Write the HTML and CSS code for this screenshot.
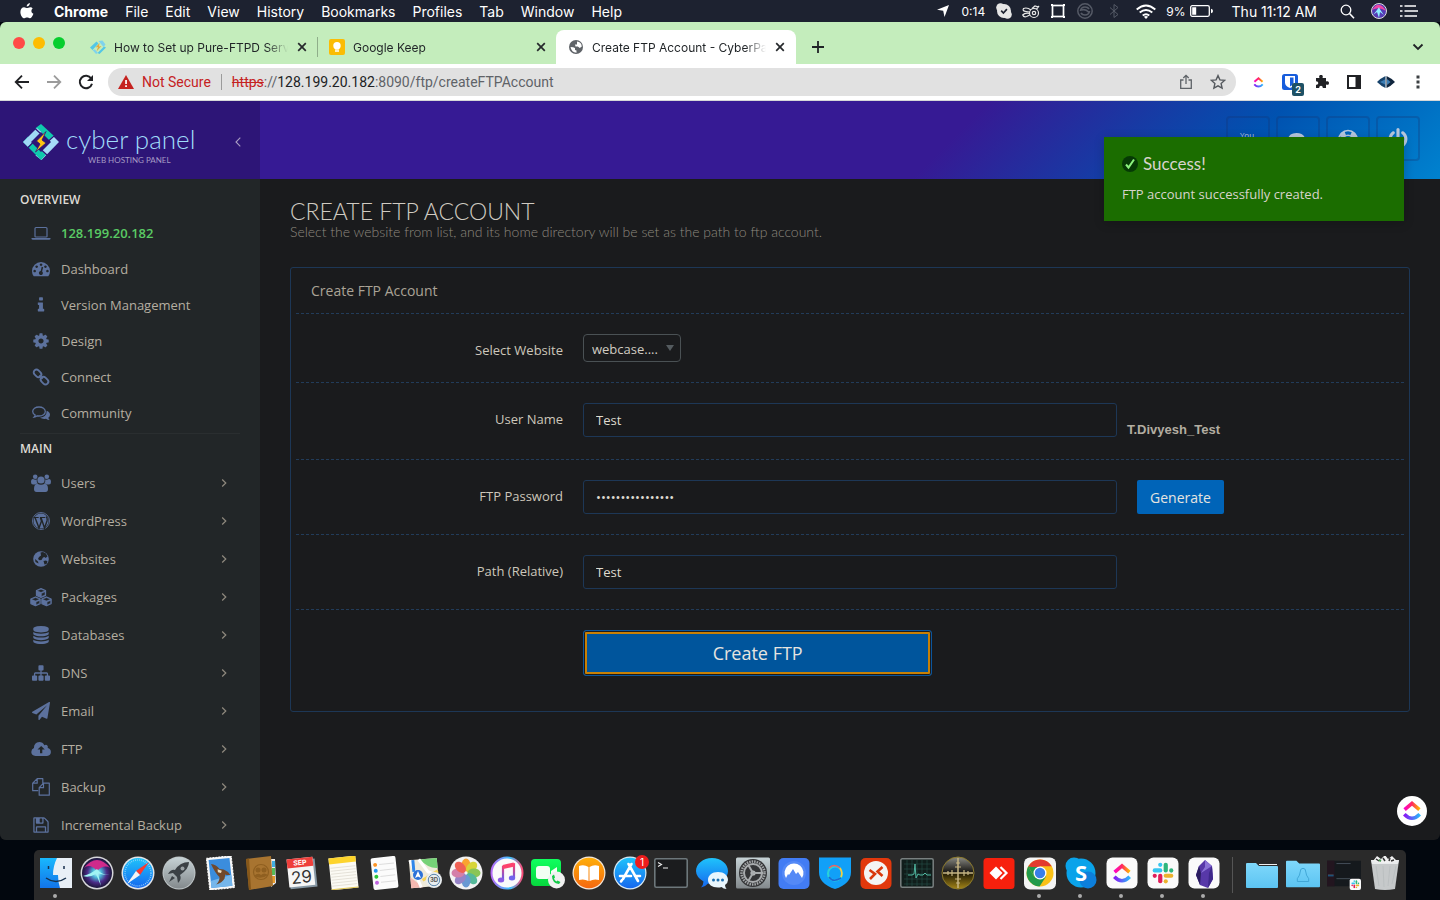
FILE: index.html
```html
<!DOCTYPE html>
<html lang="en">
<head>
<meta charset="utf-8">
<title>Create FTP Account - CyberPanel</title>
<link rel="stylesheet" href="styles.css">
</head>
<body>
<svg class="defs" width="0" height="0" aria-hidden="true">
  <defs>
    <linearGradient id="cuTop" x1="0" x2="1" y1="0" y2="0"><stop offset="0" stop-color="#ff02c8"/><stop offset=".5" stop-color="#ff2a5e"/><stop offset="1" stop-color="#ffb800"/></linearGradient>
    <linearGradient id="cuBot" x1="0" x2="1" y1="0" y2="0"><stop offset="0" stop-color="#8a15f5"/><stop offset="1" stop-color="#28b7fa"/></linearGradient>
    <radialGradient id="siri"><stop offset="0" stop-color="#d9fbff"/><stop offset=".3" stop-color="#4ab8d8"/><stop offset=".65" stop-color="#4b2a86"/><stop offset="1" stop-color="#1a1538"/></radialGradient>
    <linearGradient id="blue" x1="0" x2="0" y1="0" y2="1"><stop offset="0" stop-color="#1fc3fb"/><stop offset="1" stop-color="#1568ef"/></linearGradient>
    <linearGradient id="silver" x1="0" x2="0" y1="0" y2="1"><stop offset="0" stop-color="#c6d2d5"/><stop offset="1" stop-color="#83898c"/></linearGradient>
    <linearGradient id="orange" x1="0" x2="0" y1="0" y2="1"><stop offset="0" stop-color="#ffae08"/><stop offset="1" stop-color="#f5680f"/></linearGradient>
    <linearGradient id="finder" x1="0" x2="0" y1="0" y2="1"><stop offset="0" stop-color="#19b8fd"/><stop offset="1" stop-color="#1274ea"/></linearGradient>
    <linearGradient id="green" x1="0" x2="0" y1="0" y2="1"><stop offset="0" stop-color="#0fff5e"/><stop offset="1" stop-color="#07d73e"/></linearGradient>
    <linearGradient id="note" x1="0" x2="0" y1="0" y2="1"><stop offset="0" stop-color="#fc3d6e"/><stop offset="1" stop-color="#5c5ff0"/></linearGradient>
    <linearGradient id="ring" x1="0" x2="1" y1="0" y2="0"><stop offset="0" stop-color="#b76cf8"/><stop offset=".6" stop-color="#3bc1fb"/><stop offset="1" stop-color="#fc4d78"/></linearGradient>
    <linearGradient id="folder" x1="0" x2="0" y1="0" y2="1"><stop offset="0" stop-color="#7fd8fb"/><stop offset="1" stop-color="#5cc4f2"/></linearGradient>
    <linearGradient id="gold" x1="0" x2="0" y1="0" y2="1"><stop offset="0" stop-color="#8a8a84"/><stop offset=".48" stop-color="#161512"/><stop offset=".55" stop-color="#2c2407"/><stop offset="1" stop-color="#a48517"/></linearGradient>
    <symbol id="clickup" viewBox="0 0 20 20"><path d="M2.600 8.700L10 2.300l7.400 6.400" fill="none" stroke="url(#cuTop)" stroke-width="3.600"/><path d="M2.300 13.300q7.700 8 15.400 0" fill="none" stroke="url(#cuBot)" stroke-width="3.600"/></symbol>
    <symbol id="slack" viewBox="0 0 24 24"><g stroke-width="4.600" stroke-linecap="round" fill="none"><path d="M3 9.200h6" stroke="#36c5f0"/><path d="M9 3v.1" stroke="#36c5f0"/><path d="M15 3v6.200" stroke="#2eb67d"/><path d="M21 9.200v.1" stroke="#2eb67d"/><path d="M15 15h6" stroke="#ecb22e"/><path d="M15 21v.1" stroke="#ecb22e"/><path d="M9 15v6" stroke="#e01e5a"/><path d="M3 15v.1" stroke="#e01e5a"/></g></symbol>
    <symbol id="close" viewBox="0 0 12 12"><path d="M2.200 2.200l7.600 7.600M9.800 2.200L2.200 9.800" stroke="#26292c" stroke-width="1.700"/></symbol>
    <symbol id="right" viewBox="0 0 8 10"><path d="M2.200 1.500L5.800 5 2.200 8.500" fill="none" stroke="#8f897e" stroke-width="1.200"/></symbol>
  </defs>
</svg>

<header class="menubar">
  <nav class="menus">
    <svg class="apple" viewBox="0 0 14 16"><path d="M9.900 0c.1 1.900-1.400 3.600-3.200 3.600C6.500 1.900 8.200.2 9.900 0zM12.700 5.400c-1.900 1.200-1.700 4.300.7 5.300-.6 1.900-2.100 4.600-3.600 4.600-1.100 0-1.500-.7-2.700-.7-1.300 0-1.700.7-2.700.7C2.300 15.300.400 12 .400 8.900.4 6 2.100 4.200 4.100 4.200c1.200 0 2.200.8 3 .8.800 0 2-.9 3.400-.8.900 0 1.700.4 2.200 1.200z" fill="#fff"/></svg>
    <b>Chrome</b><span>File</span><span>Edit</span><span>View</span><span>History</span><span>Bookmarks</span><span>Profiles</span><span>Tab</span><span>Window</span><span>Help</span>
  </nav>
  <div class="status">
    <span class="slot"><svg width="12" height="12" viewBox="0 0 12 12"><path d="M12 0L7.500 12 6.200 5.800 0 4.800z" fill="#fff"/></svg></span>
    <span class="timer">0:14</span>
    <span class="slot"><svg width="16" height="16" viewBox="0 0 16 16"><circle cx="8" cy="8" r="7" fill="#e6e6e6"/><circle cx="4.500" cy="4.500" r="4.300" fill="#e6e6e6"/><circle cx="11.500" cy="11.500" r="4.300" fill="#e6e6e6"/><path d="M5.200 7.700l2.200 2.300 3.500-3.800" fill="none" stroke="#1d2230" stroke-width="1.700"/></svg></span>
    <span class="slot"><svg width="18" height="15" viewBox="0 0 18 15"><g fill="none" stroke="#e8e8e8" stroke-width="1.200"><circle cx="12" cy="9" r="4.500"/><circle cx="12" cy="9" r="1.700"/><path d="M9 6Q5 3 1.500 4.500 0 7 4 7.500L7.500 8M7.500 9.500Q3 8.500.700 11q1 2.500 4 1.500l3-1.500M10 4.500l3-2.500 3.500 1M14.500 5l2.500-3"/></g></svg></span>
    <span class="slot"><svg width="14" height="14" viewBox="0 0 14 14"><rect x="1.500" y="1.500" width="11" height="11" fill="none" stroke="#fff" stroke-width="1.700"/><path d="M0 0h2v2H0zM12 0h2v2h-2zM0 12h2v2H0zM12 12h2v2h-2z" fill="#fff"/></svg></span>
    <span class="slot"><svg width="16" height="16" viewBox="0 0 16 16"><circle cx="8" cy="8" r="7.200" fill="none" stroke="#555a66" stroke-width="1.500"/><path d="M3.500 8Q4 4 8 4q3 0 4 2M12.500 8Q12 12 8 12q-3 0-4-2M4.500 7q4-1.500 7 2" fill="none" stroke="#555a66" stroke-width="1.700"/></svg></span>
    <span class="slot wide"><svg width="10" height="14" viewBox="0 0 10 14"><path d="M1 3.500l8 7-4 3V.500l4 3-8 7" fill="none" stroke="#555a66"/></svg></span>
    <span class="slot wide"><svg width="20" height="15" viewBox="0 0 20 15"><g fill="none" stroke="#fff" stroke-width="1.900"><path d="M.700 5.500q9.300-8 18.600 0M3.700 8.600q6.300-5.300 12.600 0M6.700 11.500q3.300-2.600 6.600 0"/></g><path d="M10 15l-2.100-2.300q2.100-1.500 4.200 0z" fill="#fff"/></svg></span>
    <span class="percent">9%</span>
    <svg width="23" height="12" viewBox="0 0 23 12"><rect x=".700" y=".700" width="18.600" height="10.600" rx="1.500" fill="none" stroke="#fff" stroke-width="1.300"/><path d="M2.200 2.200h4v7.600h-4zM21 3.800q2 .5 2 2.200t-2 2.200z" fill="#fff"/></svg>
    <span class="clock">Thu 11:12 AM</span>
    <span class="slot wide"><svg width="15" height="15" viewBox="0 0 15 15"><circle cx="6" cy="6" r="4.800" fill="none" stroke="#fff" stroke-width="1.300"/><path d="M9.500 9.500l4.500 4.700" stroke="#fff" stroke-width="1.600"/></svg></span>
    <span class="slot wide"><svg width="16" height="16" viewBox="0 0 16 16"><circle cx="8" cy="8" r="7.500" fill="#553bb4" stroke="#ddd"/><path d="M1 7Q8-4 15 8 8 3 1 7z" fill="#f044a5"/><path d="M2 12q5-6 6-8 1 3 5 8l-4-3-1 6-2-6z" fill="#8eeeff"/></svg></span>
    <span class="slot"><svg width="18" height="12" viewBox="0 0 18 12"><path d="M0 1h2.500M4.500 1H16M0 6h2.500M4.500 6H18M0 11h2.500M4.500 11H17" stroke="#fff" stroke-width="1.700"/></svg></span>
  </div>
</header>

<div class="window">
  <div class="tabstrip">
    <div class="lights"><i class="red"></i><i class="yellow"></i><i class="lime"></i></div>
    <div class="tab">
      <svg width="16" height="16" viewBox="0 0 16 16"><path d="M0 8.500L6.500 2.500l2 2L2.500 11zM7.500 14l6.500-6.500 2 1L9.500 15z" fill="#53c7e6"/><path d="M8.500 2l4-.5 3 4-2 2.500zM2.500 11l2.500-.5 3 3.500-2 1z" fill="#7fd3ec"/><path d="M9.500 4L5.500 8.500 8 8l-1.500 4.500L11.500 7 9 7.500z" fill="#e8a83b"/></svg>
      <span class="tab-title">How to Set up Pure-FTPD Server on</span>
      <svg width="12" height="12"><use href="#close"/></svg>
    </div>
    <div class="tab divided">
      <svg width="16" height="16" viewBox="0 0 16 16"><rect width="16" height="16" rx="2" fill="#fbbc04"/><circle cx="8" cy="6.700" r="3.700" fill="#fff"/><path d="M6 8h4v2.500H6zM6 11.300h4v1.400H6z" fill="#fff"/></svg>
      <span class="tab-title">Google Keep</span>
      <svg width="12" height="12"><use href="#close"/></svg>
    </div>
    <div class="tab active">
      <svg width="16" height="16" viewBox="0 0 16 16"><circle cx="8" cy="8" r="7" fill="#5f6368"/><path d="M2.500 8q3 0 4.500 1v2l1.500.5v2.300Q3.500 13.500 2.500 8zM9 2.600q4.500.5 4.800 5l-2 1.300-2-1.500H7.500L7 5.500h2z" fill="#fff"/></svg>
      <span class="tab-title">Create FTP Account - CyberPanel</span>
      <svg width="12" height="12"><use href="#close"/></svg>
    </div>
    <button class="newtab" aria-label="New tab"><svg width="14" height="14" viewBox="0 0 14 14"><path d="M7 1v12M1 7h12" stroke="#202326" stroke-width="1.800"/></svg></button>
    <button class="tabsearch" aria-label="Search tabs"><svg width="12" height="8" viewBox="0 0 12 8"><path d="M1.500 1.500L6 6l4.500-4.500" fill="none" stroke="#202326" stroke-width="1.800"/></svg></button>
  </div>

  <div class="toolbar">
    <div class="tools">
      <button aria-label="Back"><svg width="16" height="16" viewBox="0 0 16 16"><path d="M15 8H2M8 1.700L1.700 8 8 14.300" fill="none" stroke="#202124" stroke-width="1.800"/></svg></button>
      <button aria-label="Forward"><svg width="16" height="16" viewBox="0 0 16 16"><path d="M1 8h13M8 1.700L14.300 8 8 14.300" fill="none" stroke="#9b9b9b" stroke-width="1.800"/></svg></button>
      <button aria-label="Reload"><svg width="16" height="16" viewBox="0 0 16 16"><path d="M13.200 4.500A6.200 6.200 0 1 0 14 9.700" fill="none" stroke="#202124" stroke-width="2"/><path d="M15 1v6H9z" fill="#202124"/></svg></button>
    </div>
    <div class="omnibox">
      <svg width="16" height="14" viewBox="0 0 16 14"><path d="M8 0l8 14H0z" fill="#c5221f"/><path d="M7.200 5h1.700v4H7.200zM7.200 10.200h1.700V12H7.200z" fill="#fff"/></svg>
      <span class="insecure">Not Secure</span>
      <span class="url"><s>https</s>://<b>128.199.20.182</b>:8090/ftp/createFTPAccount</span>
      <button aria-label="Share"><svg width="14" height="16" viewBox="0 0 14 16"><path d="M4.500 6H1.700v8.300h10.600V6H9.500M7 10V1.500M4.300 4L7 1.300 9.700 4" fill="none" stroke="#5f6368" stroke-width="1.300"/></svg></button>
      <button aria-label="Bookmark"><svg width="16" height="16" viewBox="0 0 16 16"><path d="M8 1.600l1.900 4.300 4.700.5-3.500 3.100 1 4.700L8 11.800l-4.100 2.400 1-4.700L1.400 6.400l4.700-.5z" fill="none" stroke="#55595e" stroke-width="1.400"/></svg></button>
    </div>
    <div class="tools">
      <button aria-label="ClickUp"><svg width="11" height="13"><use href="#clickup"/></svg></button>
      <button class="badged" aria-label="Bitwarden"><svg width="16" height="16" viewBox="0 0 16 16"><rect width="16" height="16" rx="2.500" fill="#175ddc"/><path d="M3 2h10v6.500q0 3.500-5 5.500-5-2-5-5.500z" fill="#fff"/><path d="M8 3.500h3.500v5q0 2-3.500 4z" fill="#175ddc"/></svg><span class="badge">2</span></button>
      <button aria-label="Extensions"><svg width="16" height="16" viewBox="0 0 16 16"><path d="M2 4h3.500C4.500 1.500 6 1 7 1s2.500.5 1.500 3H12v3.500c2.500-1 3 .5 3 1.500s-.5 2.500-3 1.500V14H8.800c0-3-3.600-3-3.600 0H2v-3.200c3 0 3-3.600 0-3.600z" fill="#202124"/></svg></button>
      <button aria-label="Side panel"><svg width="14" height="14" viewBox="0 0 14 14"><path d="M0 0h14v14H0zM2 2v10h6.500V2z" fill="#202124" fill-rule="evenodd"/></svg></button>
      <button aria-label="Profile"><svg width="18" height="12" viewBox="0 0 18 12"><path d="M0 6q4-4 8.500-6v12Q4 10 0 6z" fill="#17436c"/><path d="M18 6q-4-4-8.500-6v12Q14 10 18 6z" fill="#10253d"/><path d="M3 6l5-2.500v5zM10 3l3.500 3-3.500 3z" fill="#3c7eb5"/></svg></button>
      <button aria-label="Menu"><svg width="4" height="14" viewBox="0 0 4 14"><path d="M.500.500h3v3h-3zM.500 5.500h3v3h-3zM.500 10.500h3v3h-3z" fill="#3c4043"/></svg></button>
    </div>
  </div>

  <div class="app">
    <aside class="sidebar">
      <div class="brand">
        <svg class="brand-mark" viewBox="0 0 36 36"><path d="M18 0l13 12-5 5L12 4.500z" fill="#0fc9ad"/><path d="M36 18L18.500 36l-6-4.500L30 12z" fill="#a5dcf8"/><path d="M0 18l5-5.500 18 18L18 36z" fill="#0fc9ad"/><path d="M0 18L14 4l5 4.500L5 23z" fill="#9fd8f5"/><path d="M12 4.500l5.500 5M31 12l-6 5.500M24 31l-6-5.500M5 23.500l6-6" stroke="#2d1577" stroke-width="1.200"/><path d="M18 8l10 10-10 10L8 18z" fill="#2d1577"/><path d="M23 7.500L13.500 17l3.500 3-4.500 8L23 19l-4-3z" fill="#fdc512" stroke="#2d1577" stroke-width=".800"/></svg>
        <div class="wordmark"><span>cyber panel</span><small>WEB HOSTING PANEL</small></div>
        <button aria-label="Collapse sidebar"><svg width="6" height="10" viewBox="0 0 6 10"><path d="M5.300.700L1 5l4.300 4.300" fill="none" stroke="#a79bc2" stroke-width="1.100"/></svg></button>
      </div>
      <nav>
        <h2>OVERVIEW</h2>
        <ul class="overview">
          <li><a href="#" class="server"><svg viewBox="0 0 18 18"><path d="M3 4.500q0-1 1-1h10q1 0 1 1v8q0 .5-1 .5H4q-1 0-1-.5z" fill="none" stroke="#5c719d" stroke-width="1.200"/><path d="M-.500 14h19v.8q0 1-1.500 1H1q-1.500 0-1.500-1z"/></svg>128.199.20.182</a></li>
          <li><a href="#"><svg viewBox="0 0 18 18"><path fill-rule="evenodd" d="M0 11a9 9 0 0 1 18 0q0 2.700-1.400 4.800-.3.500-.8.500H2.200q-.5 0-.8-.5Q0 13.700 0 11zm2.600-1.300a1.300 1.300 0 1 0 .1 0zm2-4.300a1.300 1.300 0 1 0 .1 0zM9 3.400a1.300 1.300 0 1 0 .1 0zm4.400 2a1.300 1.300 0 1 0 .1 0zm2 4.300a1.300 1.300 0 1 0 .1 0zM9.700 6.800l-1 4.300a2 2 0 1 0 1.400.4l1.100-4.300z"/></svg>Dashboard</a></li>
          <li><a href="#"><svg viewBox="0 0 1792 1792"><path d="M1216 1344v128q0 26-19 45t-45 19h-512q-26 0-45-19t-19-45v-128q0-26 19-45t45-19h64v-384h-64q-26 0-45-19t-19-45v-128q0-26 19-45t45-19h384q26 0 45 19t19 45v576h64q26 0 45 19t19 45zm-128-1152v192q0 26-19 45t-45 19h-256q-26 0-45-19t-19-45v-192q0-26 19-45t45-19h256q26 0 45 19t19 45z"/></svg>Version Management</a></li>
          <li><a href="#"><svg viewBox="0 0 1792 1792"><path d="M1152 896q0-106-75-181t-181-75-181 75-75 181 75 181 181 75 181-75 75-181zm512-109v222q0 12-8 23t-20 13l-185 28q-19 54-39 91 35 50 107 138 10 12 10 25t-9 23q-27 37-99 108t-94 71q-12 0-26-9l-138-108q-44 23-91 38-16 136-29 186-7 28-36 28h-222q-14 0-24.500-8.500t-11.500-21.500l-28-184q-49-16-90-37l-141 107q-10 9-25 9-14 0-25-11-126-114-165-168-7-10-7-23 0-12 8-23 15-21 51-66.500t54-70.500q-27-50-41-99l-183-27q-13-2-21-12.500t-8-23.500v-222q0-12 8-23t19-13l186-28q14-46 39-92-40-57-107-138-10-12-10-24 0-10 9-23 26-36 98.500-107.500t94.500-71.500q13 0 26 10l138 107q44-23 91-38 16-136 29-186 7-28 36-28h222q14 0 24.500 8.500t11.500 21.500l28 184q49 16 90 37l142-107q9-9 24-9 13 0 25 10 129 119 165 170 7 8 7 22 0 12-8 23-15 21-51 66.500t-54 70.500q26 50 41 98l183 28q13 2 21 12.500t8 23.500z"/></svg>Design</a></li>
          <li><a href="#"><svg viewBox="0 0 18 18"><g fill="none" stroke="#5c719d" stroke-width="1.900"><rect x="1.300" y="2.600" width="8.400" height="5.600" rx="2.800" transform="rotate(45 5.500 5.400)"/><rect x="8.300" y="9.800" width="8.400" height="5.600" rx="2.800" transform="rotate(45 12.500 12.600)"/><path d="M7.300 7.300l3.400 3.400"/></g></svg>Connect</a></li>
          <li><a href="#"><svg viewBox="0 0 18 18"><path d="M7 3c3.600 0 6.300 2 6.300 4.500S10.600 12 7 12q-.8 0-1.700-.2-1.500 1.100-3.200 1.300 1-1.100 1.100-2.100Q.700 9.700.700 7.500C.700 5 3.400 3 7 3z" fill="none" stroke="#5c719d" stroke-width="1.300"/><path d="M14.700 6.800q3.300 1.300 3.300 4 0 1.800-1.700 3 .3 1.300 1.400 2.200-2.200 0-3.700-1.200-3.300.6-6-1 6.700-.8 6.700-7z"/></svg>Community</a></li>
        </ul>
        <h2>MAIN</h2>
        <ul class="main-nav">
          <li><a href="#"><svg viewBox="0 0 18 18"><circle cx="3.200" cy="2.700" r="2.300"/><circle cx="14.800" cy="2.700" r="2.300"/><path d="M-1 8q0-3 2-3 2 1 3.700.5Q4.300 8 6 9.500q-1.500 0-2.500 1H1Q-1 10.500-1 8zM19 8q0-3-2-3-2 1-3.700.5Q13.700 8 12 9.500q1.500 0 2.500 1H17q2 0 2-2.500z"/><circle cx="9" cy="6" r="3.600"/><path d="M2 15q0-5 3.300-5.300Q9 12 12.700 9.700 16 10 16 15q0 3-2.500 3h-9Q2 18 2 15z"/></svg>Users<svg class="chev"><use href="#right"/></svg></a></li>
          <li><a href="#"><svg viewBox="0 0 18 18"><circle cx="9" cy="9" r="8.500" fill="none" stroke="#5c719d" stroke-width=".900"/><circle cx="9" cy="9" r="7.500"/><path d="M1.500 5.500h5.200M8 5.500h5.300" stroke="#222628"/><path d="M3 5.500l4 10.500L9.500 9 8.300 5.500M9 5.500L12.500 16l2.500-7q.6-2.200-.7-4.500" fill="none" stroke="#222628" stroke-width="1.400"/></svg>WordPress<svg class="chev"><use href="#right"/></svg></a></li>
          <li><a href="#"><svg viewBox="0 0 18 18"><circle cx="9" cy="9" r="7.800"/><path d="M8.500 2.500l2.500-.5 3 1.500 1.500 3-2 1.500-1-1-1.500.5-1.500 2.500-2 .3L6 9l1-2 2-1.500zM11.500 11l2.500-.5 1.500 1-1 2.500-2 .5zM3 9l3 2.500.5 2L3.500 12z" fill="#222628"/></svg>Websites<svg class="chev"><use href="#right"/></svg></a></li>
          <li><a href="#"><svg class="big" viewBox="0 0 22 18"><g stroke="#5c719d" stroke-width="1.300" stroke-linejoin="round"><path d="M6.500 2.500L11 .700l4.500 1.800v4.800L11 9.300 6.500 7.300zM.900 11l4.600-2 4.600 2v4.600l-4.600 2-4.600-2zM11.900 11l4.600-2 4.600 2v4.600l-4.600 2-4.600-2z"/><path d="M7.300 2.700L11 4.300l3.700-1.600L11 1.400zM1.700 11.200l3.800 1.600 3.800-1.600-3.800-1.500zM12.700 11.200l3.800 1.600 3.800-1.600-3.800-1.500zM11.600 5.600l3.300-1.500v2.700l-3.300 1.400zM6.200 14.100l3.300-1.400v2.500l-3.300 1.500zM17.200 14.100l3.300-1.400v2.500l-3.300 1.500z" fill="#222628" stroke-width=".300"/></g></svg>Packages<svg class="chev"><use href="#right"/></svg></a></li>
          <li><a href="#"><svg viewBox="0 0 1792 1792"><path d="M896 768q237 0 443-43t325-127v170q0 69-103 128t-280 93.500-385 34.500-385-34.500-280-93.500-103-128v-170q119 84 325 127t443 43zm0 768q237 0 443-43t325-127v170q0 69-103 128t-280 93.500-385 34.500-385-34.500-280-93.500-103-128v-170q119 84 325 127t443 43zm0-384q237 0 443-43t325-127v170q0 69-103 128t-280 93.500-385 34.500-385-34.500-280-93.500-103-128v-170q119 84 325 127t443 43zm0-1152q208 0 385 34.500t280 93.500 103 128v128q0 69-103 128t-280 93.500-385 34.500-385-34.500-280-93.500-103-128v-128q0-69 103-128t280-93.500 385-34.500z"/></svg>Databases<svg class="chev"><use href="#right"/></svg></a></li>
          <li><a href="#"><svg viewBox="0 0 1792 1792"><path d="M1792 1248v320q0 40-28 68t-68 28h-320q-40 0-68-28t-28-68v-320q0-40 28-68t68-28h96v-192h-512v192h96q40 0 68 28t28 68v320q0 40-28 68t-68 28h-320q-40 0-68-28t-28-68v-320q0-40 28-68t68-28h96v-192h-512v192h96q40 0 68 28t28 68v320q0 40-28 68t-68 28h-320q-40 0-68-28t-28-68v-320q0-40 28-68t68-28h96v-192q0-52 38-90t90-38h512v-192h-96q-40 0-68-28t-28-68v-320q0-40 28-68t68-28h320q40 0 68 28t28 68v320q0 40-28 68t-68 28h-96v192h512q52 0 90 38t38 90v192h96q40 0 68 28t28 68z"/></svg>DNS<svg class="chev"><use href="#right"/></svg></a></li>
          <li><a href="#"><svg viewBox="0 0 1792 1792"><path d="M1764 11q33 24 27 64l-256 1536q-5 29-32 45-14 8-31 8-11 0-24-5l-453-185-242 295q-18 23-49 23-13 0-22-4-19-7-30.500-23.500t-11.500-36.500v-349l864-1059-1069 925-395-162q-37-14-40-55-2-40 32-59l1664-960q15-9 32-9 20 0 36 11z"/></svg>Email<svg class="chev"><use href="#right"/></svg></a></li>
          <li><a href="#"><svg viewBox="0 0 18 18"><path fill-rule="evenodd" d="M3.500 16Q-.700 15.500-.700 12q0-2.800 2.600-4Q2 2.300 7.300 2q3.500 0 5 3.300 2-1.200 3.200.4.700 1 .2 2.300 3.200.9 3.200 4 0 3.600-3.900 4zM8 13.300h2.300V9.500h2.500L9.200 5.900 5.500 9.500H8z"/></svg>FTP<svg class="chev"><use href="#right"/></svg></a></li>
          <li><a href="#"><svg viewBox="0 0 18 18"><path d="M10.800 6.500V.700H5.200L.700 5.200v7.500h5.500M5.200.700v4.500H.700M11.500 5.200h5.800v12H7.200V9.700zM11.500 5.200v4.500H7.200" fill="none" stroke="#5c719d" stroke-width="1.200" stroke-linejoin="round"/></svg>Backup<svg class="chev"><use href="#right"/></svg></a></li>
          <li><a href="#"><svg viewBox="0 0 1792 1792"><path d="M512 1536h768v-384h-768v384zm896 0h128v-896q0-14-10-38.500t-20-34.500l-281-281q-10-10-34-20t-39-10v416q0 40-28 68t-68 28h-576q-40 0-68-28t-28-68v-416h-128v1280h128v-416q0-40 28-68t68-28h832q40 0 68 28t28 68v416zm-384-928v-320q0-13-9.500-22.500t-22.500-9.500h-192q-13 0-22.500 9.500t-9.500 22.500v320q0 13 9.500 22.500t22.500 9.500h192q13 0 22.500-9.500t9.500-22.500zm640 32v928q0 40-28 68t-68 28h-1344q-40 0-68-28t-28-68v-1344q0-40 28-68t68-28h928q40 0 88 20t76 48l280 280q28 28 48 76t20 88z"/></svg>Incremental Backup<svg class="chev"><use href="#right"/></svg></a></li>
        </ul>
      </nav>
    </aside>

    <div class="page">
      <div class="topbar">
        <button aria-label="YouTube"><svg width="20" height="22" viewBox="0 0 20 22"><text class="yt" x="9" y="10" text-anchor="middle">You</text><rect x="2" y="12" width="16" height="10" rx="2"/></svg></button>
        <button aria-label="Messages"><svg width="20" height="22" viewBox="0 0 20 22"><path d="M0 11q1-6 8.500-6 6 0 8 4 3.500 0 3.500 4 0 4-5 5H6q-6-1-6-7z"/></svg></button>
        <button aria-label="Support"><svg width="22" height="22" viewBox="0 0 22 22"><g fill="none" stroke="#b8c8de"><circle cx="11" cy="12" r="9.400" stroke-width="1.500"/><circle cx="11" cy="12" r="4.800" stroke-width="1.500"/><circle cx="11" cy="12" r="7.200" stroke-width="5" stroke-dasharray="5.310 6" stroke-dashoffset="-3"/></g></svg></button>
        <button aria-label="Log out"><svg width="22" height="22" viewBox="0 0 1792 1792"><path d="M1664 896q0 156-61 298t-164 245-245 164-298 61-298-61-245-164-164-245-61-298q0-182 80.500-343t226.500-270q43-32 95.500-25t83.500 50q32 42 24.500 94.500t-49.500 84.500q-98 74-151.500 181t-53.500 228q0 104 40.500 198.500t109.500 163.500 163.500 109.500 198.500 40.500 198.500-40.500 163.500-109.500 109.500-163.500 40.500-198.500q0-121-53.500-228t-151.500-181q-42-32-49.500-84.500t24.500-94.500q31-43 84-50t95 25q146 109 226.500 270t80.500 343zm-640-768v640q0 52-38 90t-90 38-90-38-38-90v-640q0-52 38-90t90-38 90 38 38 90z"/></svg></button>
      </div>
      <main>
        <h1>CREATE FTP ACCOUNT</h1>
        <p class="lead">Select the website from list, and its home directory will be set as the path to ftp account.</p>
        <form class="panel">
          <h3>Create FTP Account</h3>
          <div class="row">
            <label for="site">Select Website</label>
            <div class="field picker">
              <select id="site"><option>webcase....</option></select>
              <svg width="8" height="6" viewBox="0 0 8 6"><path d="M0 0h8L4 6z" fill="#545b5f"/></svg>
            </div>
          </div>
          <div class="row">
            <label for="user">User Name</label>
            <div class="field"><input id="user" type="text" value="Test"></div>
            <output class="fullname" for="user">T.Divyesh_Test</output>
          </div>
          <div class="row">
            <label for="pass">FTP Password</label>
            <div class="field"><input id="pass" type="password" value="abcdefghijklmnop"></div>
            <div class="aside"><button type="button" class="generate">Generate</button></div>
          </div>
          <div class="row">
            <label for="path">Path (Relative)</label>
            <div class="field"><input id="path" type="text" value="Test"></div>
          </div>
          <div class="row last">
            <div class="submit"><button type="button" class="create">Create FTP</button></div>
          </div>
        </form>
      </main>
    </div>

    <div class="toast" role="status">
      <h4><svg width="16" height="16" viewBox="0 0 16 16"><circle cx="8" cy="8" r="8" fill="#063a05"/><path d="M4 8.500l2.500 3L12 3.500" fill="none" stroke="#8bf27d" stroke-width="2"/></svg>Success!</h4>
      <p>FTP account successfully created.</p>
    </div>
    <button class="floating" aria-label="ClickUp"><svg width="20" height="22"><use href="#clickup"/></svg></button>
  </div>
</div>

<footer class="dock">
  <span class="app-icon running"><svg viewBox="0 0 34 34"><path d="M1 2h32v30H1z" fill="#e8eff6"/><path d="M1 2h17q-4 8-4 17h5q0 7 2 13H1z" fill="url(#finder)"/><path d="M9.500 10v3M25 10v3M7 22q10 7 20 0" fill="none" stroke="#17314d" stroke-width="1.500"/></svg></span>
  <span class="app-icon"><svg viewBox="0 0 34 34"><circle cx="17" cy="17" r="16.500" fill="#d6d6da"/><circle cx="17" cy="17" r="15" fill="url(#siri)"/><path d="M4 12Q17-4 30 12 24 8 17 15 10 7 4 12z" fill="#d02a8b"/><path d="M3 20q8-2 14-7 4 6 13 6-8 0-12-2l3 13-5-12Q9 22 3 20z" fill="#9ff4f4"/></svg></span>
  <span class="app-icon"><svg viewBox="0 0 34 34"><circle cx="17" cy="17" r="16.500" fill="#e3e5e8"/><circle cx="17" cy="17" r="15" fill="url(#blue)"/><circle cx="17" cy="17" r="13" fill="none" stroke="#a5daf9" stroke-width="1.500" stroke-dasharray=".7 1.300"/><path d="M28 6L19 19l-4-4z" fill="#fb3a30"/><path d="M6 28l9-13 4 4z" fill="#f4f4f4"/></svg></span>
  <span class="app-icon"><svg viewBox="0 0 34 34"><circle cx="17" cy="17" r="16.500" fill="#bfc6c8"/><circle cx="17" cy="17" r="15.500" fill="url(#silver)"/><path d="M27 6q-9 0-14 8-4-1-7 4l5-1 4 4 1 6q4-4 2-8 9-6 9-13zM10 20l-3 6 6-4z" fill="#3b4145"/><circle cx="20.500" cy="12.500" r="2" fill="#9aa1a4"/></svg></span>
  <span class="app-icon"><svg viewBox="0 0 34 34"><g transform="rotate(-6 17 17)"><rect x="5" y="1" width="25" height="32" fill="#f7f7f7" stroke="#fff" stroke-dasharray="2 1"/><path d="M7 3h21v28H7z" fill="#3b8ddd"/><path d="M7 24l21-4v11H7z" fill="#75b6eb"/><path d="M9 7q5 1 8 6l4 1q4 2 6 6-3 0-5-1l-1 4q-3 4-9 5 4-3 4-7-4-5-7-14z" fill="#71492c"/><path d="M15 13l4 2-1 2-3-1z" fill="#eee0c3"/></g></svg></span>
  <span class="app-icon"><svg viewBox="0 0 34 34"><path d="M27 3h4l1 24-5 4z" fill="#eee"/><path d="M28 5h3v6h-3z" fill="#41aee2"/><path d="M28 12h3v7h-3z" fill="#57bd58"/><path d="M28 20h3v7h-3z" fill="#e79b2e"/><path d="M2 3l25-3 2 30-24 4z" fill="#a87430"/><path d="M2 3l3 31 2-.5-2-31z" fill="#865719"/><circle cx="17" cy="16" r="7.500" fill="none" stroke="#8f5f20" stroke-width="1.200"/><circle cx="14" cy="14" r="2.500" fill="#8f5f20"/><circle cx="20" cy="14" r="2.500" fill="#8f5f20"/><path d="M10 20q4-4 7-1 3-3 7 0-7 5-14 1z" fill="#8f5f20"/></svg></span>
  <span class="app-icon"><svg viewBox="0 0 34 34"><g transform="rotate(-6 17 17)"><path d="M4 4h27v28H4z" fill="#8697a4"/><path d="M3 2h26v28H3z" fill="#f6f6f6"/><path d="M3 2h26v9H3z" fill="#ee3f3b"/><text class="cal-month" x="16" y="9" text-anchor="middle">SEP</text><text class="cal-day" x="16" y="27" text-anchor="middle">29</text></g></svg></span>
  <span class="app-icon"><svg viewBox="0 0 34 34"><g transform="rotate(-6 17 17)"><path d="M4 1h27v32H4z" fill="#fbfaf4"/><path d="M4 1h27v6H4z" fill="#fdd42c"/><path d="M5 11h25M5 14h25M5 17h25M5 20h25M5 23h25M5 26h25M5 29h25" stroke="#ddd9ce" stroke-width=".700"/><path d="M4 32.500h27" stroke="#dec34d"/></g></svg></span>
  <span class="app-icon"><svg viewBox="0 0 34 34"><g transform="rotate(-6 17 17)"><rect x="5" y="1" width="25" height="32" rx="2" fill="#fbfbfb"/><path d="M13 8h15M13 14h15M13 20h15M13 26h15" stroke="#ddd"/><circle cx="9" cy="8" r="2" fill="#fb9426"/><circle cx="9" cy="14" r="2" fill="#2398f5"/><circle cx="9" cy="20" r="2" fill="#2bc73a"/><circle cx="9" cy="26" r="2" fill="#c266e2"/></g></svg></span>
  <span class="app-icon"><svg viewBox="0 0 34 34"><g transform="rotate(-5 17 17)"><path d="M2 3h28v28H2z" fill="#eeeadb"/><path d="M13 3h17v10q-9 0-17-10z" fill="#76d278"/><path d="M2 20l12 11H2z" fill="#f4b8b0"/><path d="M3 3l9 28M12 3l8 13 10 5" fill="none" stroke="#fff" stroke-width="3"/><path d="M6 3v12" stroke="#2e86ea" stroke-width="3"/><path d="M14 24l16-8" stroke="#f5d35c" stroke-width="3"/></g><circle cx="10" cy="19" r="5" fill="#2b72d8"/><path d="M10 15l3 7-3-1.500L7 22z" fill="#fff"/><circle cx="26" cy="24" r="8" fill="#e9edef"/><circle cx="26" cy="24" r="5.700" fill="none" stroke="#5b86ab"/><text class="map-text" x="26" y="26" text-anchor="middle">3D</text></svg></span>
  <span class="app-icon"><svg viewBox="0 0 34 34"><circle cx="17" cy="17" r="16.500" fill="#f3f3f3"/><g opacity=".9"><ellipse cx="17" cy="9" rx="4.500" ry="6.500" fill="#fb9b1c"/><ellipse cx="17" cy="9" rx="4.500" ry="6.500" fill="#d5d225" transform="rotate(45 17 17)"/><ellipse cx="17" cy="9" rx="4.500" ry="6.500" fill="#7fc144" transform="rotate(90 17 17)"/><ellipse cx="17" cy="9" rx="4.500" ry="6.500" fill="#45b390" transform="rotate(135 17 17)"/><ellipse cx="17" cy="9" rx="4.500" ry="6.500" fill="#5b90d0" transform="rotate(180 17 17)"/><ellipse cx="17" cy="9" rx="4.500" ry="6.500" fill="#8d77c3" transform="rotate(225 17 17)"/><ellipse cx="17" cy="9" rx="4.500" ry="6.500" fill="#d173a1" transform="rotate(270 17 17)"/><ellipse cx="17" cy="9" rx="4.500" ry="6.500" fill="#ef5245" transform="rotate(315 17 17)"/></g></svg></span>
  <span class="app-icon"><svg viewBox="0 0 34 34"><circle cx="17" cy="17" r="15.500" fill="#fafafa" stroke="url(#ring)" stroke-width="2"/><path d="M13 24V11l11-2.500V22" fill="none" stroke="url(#note)" stroke-width="2.200"/><path d="M13 11l11-2.500" stroke="#fc426d" stroke-width="4"/><ellipse cx="11" cy="24" rx="3.200" ry="2.500" fill="#8b5ae4"/><ellipse cx="22" cy="22" rx="3.200" ry="2.500" fill="#7163ed"/></svg></span>
  <span class="app-icon"><svg viewBox="0 0 34 34"><rect x="0" y="3" width="30" height="27" rx="4" fill="url(#green)"/><rect x="5" y="10" width="14" height="13" rx="3" fill="#f2fff4"/><path d="M20 15l6-4v11l-6-4z" fill="#f2fff4"/><circle cx="25.500" cy="24" r="8.500" fill="#f1f1f1"/><path d="M21 20q0 7 7 8l1.500-2-3-1.500-1 1q-2-1-2.500-3l1-1-1-3z" fill="#14c948"/></svg></span>
  <span class="app-icon"><svg viewBox="0 0 34 34"><circle cx="17" cy="17" r="16.500" fill="#f2e7db"/><circle cx="17" cy="17" r="15.300" fill="url(#orange)"/><path d="M16.500 11Q12 8 7 10v14q5-1.500 9.500 1zM17.500 11Q22 8 27 10v14q-5-1.500-9.500 1z" fill="#fff"/></svg></span>
  <span class="app-icon"><svg viewBox="0 0 34 34"><circle cx="17" cy="17" r="16.500" fill="#d9ebf5"/><circle cx="17" cy="17" r="15.300" fill="url(#blue)"/><path d="M18.500 8L10 23M15.500 8L25 25M7 20h11M22 20h5M9 24l-1 1.500" stroke="#fff" stroke-width="2.600" stroke-linecap="round"/></svg><em>1</em></span>
  <span class="app-icon"><svg viewBox="0 0 34 34"><rect x=".800" y="2.800" width="32.400" height="28.400" rx="1.500" fill="#1b1c1e" stroke="#6d777b" stroke-width="1.600"/><path d="M4 6.500l3.500 2L4 10.500M9 12h5" fill="none" stroke="#eee" stroke-width="1.100"/></svg></span>
  <span class="app-icon"><svg viewBox="0 0 34 34"><path d="M17 2c9 0 16 6 16 13s-7 13-16 13q-2 0-4-.5-3 3.500-7 4 2.500-3 2.500-6Q1 21 1 15C1 8 8 2 17 2z" fill="url(#blue)"/><path d="M23 16c6 0 10 3.500 10 8q0 3-3 5 0 2 1.500 4-3 0-5-2-1.500.5-3.500.5c-6 0-10-3-10-7.500s4-8 10-8z" fill="#e9f6fd"/><g fill="#1c6eae"><circle cx="18.500" cy="24" r="1.500"/><circle cx="23" cy="24" r="1.500"/><circle cx="27.500" cy="24" r="1.500"/></g></svg></span>
  <span class="app-icon"><svg viewBox="0 0 34 34"><rect x="0" y="1.500" width="34" height="31" rx="1.500" fill="url(#silver)"/><circle cx="17" cy="17" r="14" fill="#343537"/><circle cx="17" cy="17" r="11.500" fill="none" stroke="#a3a6a8" stroke-width="2.500" stroke-dasharray="1.500 1"/><circle cx="17" cy="17" r="9" fill="none" stroke="#a8abad" stroke-width="2"/><circle cx="17" cy="17" r="2.600" fill="#b4b7b9"/><path d="M17 17h10M17 17l-5-8.600M17 17l-5 8.600" stroke="#a8abad" stroke-width="2"/></svg></span>
  <span class="app-icon"><svg viewBox="0 0 34 34"><rect x="1.500" y="2" width="31" height="31" rx="5" fill="#427cf4"/><circle cx="17" cy="17" r="12" fill="#5489f6"/><path d="M9 22a9.500 9.500 0 1 1 16 0l-4-6-2 2-3-5-4 6-1-1z" fill="#fff"/></svg></span>
  <span class="app-icon"><svg viewBox="0 0 34 34"><path d="M1 1.500h32V16q0 12-16 17Q1 28 1 16z" fill="#11a0f8"/><circle cx="17" cy="17.500" r="7" fill="none" stroke="#2ad0d8" stroke-width="2.200"/><path d="M11 12q5-5 11 0" fill="none" stroke="#f35f62" stroke-width="1.600"/><path d="M22 12q3 5 1 9" fill="none" stroke="#ffc83c" stroke-width="1.600"/><path d="M11 21q4 6 12 1" fill="none" stroke="#1c67d5" stroke-width="1.600"/></svg></span>
  <span class="app-icon"><svg viewBox="0 0 34 34"><rect x="1.500" y="2" width="31" height="31" rx="5" fill="#e2380c"/><circle cx="17" cy="17" r="12" fill="#f4f4f4"/><path d="M10.500 14l5.500 4-5 5M23.500 11l-5 4.500 5 4.500" fill="none" stroke="#d9390d" stroke-width="2.600"/></svg></span>
  <span class="app-icon"><svg viewBox="0 0 34 34"><rect x=".800" y="2.800" width="32.400" height="28.400" rx="1.500" fill="#101d1b" stroke="#798080" stroke-width="1.500"/><path d="M4 8h27M4 13h27M4 18h27M4 23h27M4 28h27M7 4v26M12 4v26M17 4v26M22 4v26M27 4v26" stroke="#27504a" stroke-width=".600"/><path d="M8 19h4l2-1 1-10 1 14 2-4 2 1h3l2-2 2 2h4" fill="none" stroke="#4fb59e"/></svg></span>
  <span class="app-icon"><svg viewBox="0 0 34 34"><circle cx="17" cy="17" r="16" fill="url(#gold)" stroke="#8c7a2b"/><path d="M17 2v30M2 17h30" stroke="#c7b684" stroke-width="1.500"/><path d="M15 7h4M14 11h6M14 23h6M15 27h4M7 15v4M11 14v6M23 14v6M27 15v4" stroke="#c7b684" stroke-width="1.200"/></svg></span>
  <span class="app-icon"><svg viewBox="0 0 34 34"><rect x="1.500" y="2" width="31" height="31" rx="3.500" fill="#f7200d"/><path d="M14 10.500l6.500 6.500-6.500 6.500L7.500 17z" fill="#fff"/><path d="M18.500 11l6 6-6 6" fill="none" stroke="#fff" stroke-width="2.200"/></svg></span>
  <span class="app-icon running"><svg viewBox="0 0 34 34"><rect x="1" y="1.500" width="32" height="32" rx="6" fill="#f4f4f4"/><circle cx="17" cy="17" r="13.500" fill="#fbc116"/><path d="M5.300 10.300A13.500 13.500 0 0 1 28.700 10.300H17z" fill="#e33b2e"/><path d="M5.300 10.300A13.500 13.500 0 0 0 16.500 30.500L23 20.500H11z" fill="#229a4a"/><path d="M5.300 10.300L11 20.500l6-3.500V10z" fill="#229a4a"/><path d="M5.300 10.300L17 4v7H9z" fill="#e33b2e"/><circle cx="17" cy="17" r="6.500" fill="#fff"/><circle cx="17" cy="17" r="5.200" fill="#397fe8"/></svg></span>
  <span class="app-icon running"><svg viewBox="0 0 34 34"><circle cx="17" cy="17" r="14.500" fill="#0aa3ea"/><circle cx="10" cy="10" r="8.500" fill="#0aa3ea"/><circle cx="24" cy="24" r="8.500" fill="#0d7fdb"/><text class="skype" x="17" y="25" text-anchor="middle">S</text></svg></span>
  <span class="app-icon running"><svg viewBox="0 0 34 34"><rect x="1.500" y="1.500" width="31" height="31" rx="6" fill="#fafafa"/><use href="#clickup" x="7" y="6" width="20" height="23"/></svg></span>
  <span class="app-icon running"><svg viewBox="0 0 34 34"><rect x="1.500" y="1.500" width="31" height="31" rx="6" fill="#fafafa"/><use href="#slack" x="6" y="6" width="22" height="22"/></svg></span>
  <span class="app-icon running"><svg viewBox="0 0 34 34"><rect x="1.500" y="1.500" width="31" height="31" rx="6" fill="#fafafa"/><path d="M18 4l7 6 1 13-5 9-8-3-4-10 3-9z" fill="#5738a8"/><path d="M18 4l-6 6 2 7-1 12-4-10 3-9z" fill="#2b1e60"/><path d="M18 4l7 6-11 7 4-6z" fill="#8a72d6"/><path d="M25 10l1 13-5 9 1-15z" fill="#3e288a"/></svg></span>
  <i class="divider"></i>
  <span class="app-icon"><svg viewBox="0 0 34 34"><path d="M1 8q0-1 1-1h9l3 3h18q1 0 1 1v20q0 1-1 1H2q-1 0-1-1z" fill="url(#folder)"/><path d="M14 8.500h18" stroke="#eee"/></svg></span>
  <span class="app-icon"><svg viewBox="-1 0 36 34"><path d="M-1 5q0-1 1-1h10l3 3h21q1 0 1 1v23q0 1-1 1H0q-1 0-1-1z" fill="url(#folder)"/><path d="M17 12q3 0 3 4 0 3 3 7v3H11v-3q3-4 3-7 0-4 3-4z" fill="none" stroke="#3fa5d5" stroke-width="1"/></svg></span>
  <span class="app-icon"><svg viewBox="0 0 36 34"><path d="M0 4h36v27H0z" fill="#15191d"/><path d="M0 4h8v27H0z" fill="#22151f"/><path d="M10 7h15M10 23h15M1 19h6" stroke="#46505a"/><path d="M1 20h6" stroke="#176aa2"/><rect x="24" y="23" width="12" height="12" rx="2" fill="#fafafa"/><use href="#slack" x="25.500" y="24.500" width="9" height="9"/></svg></span>
  <span class="app-icon"><svg viewBox="0 0 34 34"><path d="M3 4h28l-4 29q-10 2-20 0z" fill="#c6c9ca"/><path d="M3 4h28l-1 4H4z" fill="#e9ebec"/><path d="M5 5l4-5 4 3 4-4 3 4 4-3 5 5q-12 4-24 0z" fill="#f2f2f2"/><path d="M8 3l3 2M15 2l2 3M22 2l-1 3M26 4l-3 1" stroke="#333" stroke-width="1.500"/><path d="M11 4l2 1" stroke="#4a9a55" stroke-width="2"/><path d="M8 10l3 20M15 10l1 21M22 10l-2 20M28 10l-4 18" stroke="#b8bcbe" stroke-width=".800"/></svg></span>
</footer>
</body>
</html>
```

FILE: styles.css
```css
* { box-sizing: border-box; }
body {
  margin: 0;
  height: 100vh;
  display: flex;
  flex-direction: column;
  overflow: hidden;
  background: #02070e;
  font-family: "Open Sans", "Noto Sans", sans-serif;
  font-size: 13px;
}
button { border: 0; padding: 0; background: none; font: inherit; color: inherit; display: flex; align-items: center; justify-content: center; }
h1, h2, h3, h4, p, ul { margin: 0; padding: 0; font-weight: 400; }
ul { list-style: none; }
svg { display: block; flex: none; }
.defs { position: absolute; }

/* macOS menu bar */
.menubar {
  flex: none;
  height: 22px;
  display: flex;
  justify-content: space-between;
  align-items: center;
  background: #1d2230;
  color: #fff;
  font-family: Inter, sans-serif;
  font-size: 14px;
}
.menus { display: flex; align-items: center; gap: 17px; padding-left: 20px; }
.apple { width: 14px; height: 16px; margin-right: 3px; }
.status { display: flex; align-items: center; padding-right: 18px; }
.slot { width: 27px; display: flex; justify-content: center; }
.wide { width: 32px; }
.timer { font-size: 12px; width: 34px; text-align: center; }
.percent { font-size: 12px; margin: 0 4px; }
.clock { margin: 0 14px 0 19px; }

/* Browser chrome */
.window { flex: 1; min-height: 0; display: flex; flex-direction: column; }
.tabstrip {
  flex: none;
  height: 42px;
  padding-top: 8px;
  display: flex;
  background: #c4edbc;
  border-radius: 6px 6px 0 0;
  font-family: Inter, sans-serif;
  font-size: 12px;
  color: #1f2326;
}
.lights { width: 78px; padding: 7px 0 0 13px; display: flex; gap: 8px; }
.lights i { width: 12px; height: 12px; border-radius: 50%; }
.red { background: #ff4a46; }
.yellow { background: #fdbc02; }
.lime { background: #07ce2e; }
.tab { width: 239px; height: 34px; padding: 0 9px 0 12px; display: flex; align-items: center; gap: 8px; }
.tab-title { flex: 1; overflow: hidden; white-space: nowrap; mask-image: linear-gradient(to right, #000 88%, transparent); }
.divided { background: linear-gradient(#8fae8a, #8fae8a) 0 7px / 1px 20px no-repeat; }
.active { width: 240px; background: #fff; border-radius: 8px 8px 0 0; padding-right: 10px; }
.newtab { width: 44px; height: 34px; }
.tabsearch { margin-left: auto; width: 44px; height: 34px; }
.toolbar { flex: none; height: 37px; display: flex; align-items: center; gap: 6px; padding: 0 6px; background: #fff; border-bottom: 1px solid #d5d7d8; }
.tools { display: flex; }
.tools button { width: 32px; height: 28px; }
.omnibox {
  flex: 1;
  height: 28px;
  display: flex;
  align-items: center;
  padding: 0 2px 0 10px;
  border-radius: 14px;
  background: #e1e1e1;
  color: #5f6368;
  font-family: Roboto, sans-serif;
  font-size: 14px;
}
.omnibox button { width: 32px; height: 28px; }
.insecure { margin-left: 8px; padding-right: 10px; border-right: 1px solid #9b9b9b; color: #c5221f; }
.url { flex: 1; padding-left: 10px; }
.url b { font-weight: 400; color: #202124; }
.url s { color: #c5221f; }
.badged { position: relative; }
.badge { position: absolute; left: 18px; top: 15px; width: 12px; height: 13px; border-radius: 2px; background: #1e5165; color: #fff; font: 700 9px/13px Inter, sans-serif; text-align: center; }

/* Panel */
.app { position: relative; flex: 1; min-height: 0; display: flex; overflow: hidden; background: #1a1b1d; border-radius: 0 0 6px 6px; }
.sidebar { flex: none; width: 260px; background: #222628; }
.brand { height: 78px; display: flex; align-items: center; padding: 3px 19px 0 23px; background: #2d1577; }
.brand-mark { width: 36px; height: 36px; }
.wordmark { flex: 1; margin-left: 7px; padding-top: 6px; display: flex; flex-direction: column; font-family: Lato, sans-serif; font-weight: 300; color: #a0dcfa; }
.wordmark span { font-size: 26px; line-height: 31px; }
.wordmark small { padding-left: 22px; font-size: 8px; line-height: 10px; font-weight: 400; color: #a69bc5; }
.sidebar nav { padding-top: 5px; }
.sidebar h2 { padding-left: 20px; font-size: 12px; font-weight: 600; line-height: 31px; color: #dedbd5; }
.overview + h2 { margin: 2px 20px 0; padding: 0; line-height: 30px; border-top: 1px solid #2a2e30; }
.sidebar a { height: 36px; display: flex; align-items: center; gap: 11px; padding: 0 32px; color: #b5aea1; text-decoration: none; }
.sidebar a svg { width: 18px; height: 18px; fill: #5c719d; overflow: visible; }
.sidebar a .big { width: 22px; margin: 0 -2px; }
.sidebar a .chev { width: 8px; height: 10px; margin-left: auto; }
.sidebar .server { color: #5acb64; font-weight: 600; }
.main-nav a { height: 38px; }

.page { flex: 1; min-width: 0; }
.topbar { height: 78px; display: flex; justify-content: flex-end; gap: 6px; padding: 15px 20px 0 0; background: linear-gradient(135deg, #361a94 58%, #0052b0 82%, #0082cf); }
.topbar button { width: 44px; height: 45px; border: 2px solid rgba(20, 50, 110, .28); border-radius: 4px; }
.topbar svg { fill: #b8c8de; }
.yt { font: 8px "Open Sans", sans-serif; }
main { padding: 19px 30px; }
h1 { font: 300 23px/26px Lato, sans-serif; color: #d0cbc2; }
.lead { font: 300 14px/16px Lato, sans-serif; color: #8e897f; }
.panel { margin-top: 27px; padding: 0 5px; border: 1px solid #1d3756; border-radius: 3px; }
.panel h3 { height: 46px; padding-left: 15px; font-size: 14px; line-height: 46px; color: #aaa396; border-bottom: 1px dashed #223c5a; }
.row { display: grid; grid-template-columns: repeat(12, 1fr); padding: 20px 0; border-bottom: 1px dashed #223c5a; }
.row label { grid-column: span 3; padding: 7px 10px 0 0; text-align: right; line-height: 18px; font-weight: 500; color: #cdc7bb; }
.field { grid-column: span 6; padding: 0 10px; }
.field input { display: block; width: 100%; height: 34px; padding: 0 12px; border: 1px solid #1d3756; border-radius: 3px; background: #191a1c; color: #dedad0; font: 13px "Open Sans", sans-serif; }
.picker { display: flex; align-items: center; justify-self: start; position: relative; }
.picker select { width: 98px; height: 28px; padding: 1px 8px 0; appearance: none; border: 1px solid #4a5154; border-radius: 4px; background: #1a1b1d; color: #d0cbc2; font: 13px "Open Sans", sans-serif; }
.picker svg { position: absolute; right: 17px; pointer-events: none; }
.fullname { grid-column: span 3; padding-top: 17px; line-height: 19px; font-family: "Liberation Sans", Arial, sans-serif; font-weight: 700; color: #b3ada1; }
.aside { grid-column: span 3; padding-left: 10px; }
.generate { height: 34px; padding: 0 13px; border-radius: 2px; background: #0064b8; color: #e6e4e0; font-size: 14px; font-weight: 500; }
.last { border: 0; padding-bottom: 35px; }
.submit { grid-column: 4 / span 4; padding: 0 10px; }
.create { width: 100%; height: 46px; border: 1px solid #0b559c; border-radius: 3px; background: #00559c; box-shadow: inset 0 0 0 1px #1a1b1d, inset 0 0 0 3px #c88005; font-size: 18px; color: #e6e4e0; }

.toast { position: absolute; top: 36px; right: 36px; width: 300px; padding: 14px 18px 17px; background: #1b6d00; box-shadow: 0 2px 10px rgba(0, 0, 0, .2); color: #d8d4cc; }
.toast h4 { display: flex; align-items: center; gap: 5px; font: 400 17px/25px Lato, sans-serif; }
.toast p { margin-top: 9px; line-height: 19px; font-weight: 500; }
.floating { position: absolute; right: 13px; bottom: 14px; width: 30px; height: 30px; border-radius: 50%; background: #fff; }

/* Dock */
.dock { flex: none; align-self: center; margin-top: 10px; height: 50px; display: flex; padding: 0 1px; background: #2a2a2a; border-radius: 5px 5px 0 0; }
.app-icon { position: relative; width: 41px; height: 50px; padding-top: 6px; display: flex; justify-content: center; }
.app-icon svg { width: 34px; height: 34px; }
.running::after { content: ""; position: absolute; left: 18px; top: 44px; width: 4px; height: 4px; border-radius: 50%; background: #aaa; }
.app-icon em { position: absolute; right: 1px; top: 5px; width: 14px; height: 14px; border-radius: 50%; background: #ee1c1c; color: #fff; font: 10px/14px Inter, sans-serif; text-align: center; }
.divider { width: 1px; height: 36px; margin: 7px 8px; background: #555; }
.cal-month { font: 700 7px Inter, sans-serif; fill: #fff; }
.cal-day { font: 17px Inter, sans-serif; fill: #333; }
.map-text { font: 700 6px Inter, sans-serif; fill: #555; }
.skype { font: 700 22px "Open Sans", sans-serif; fill: #fff; }
```
